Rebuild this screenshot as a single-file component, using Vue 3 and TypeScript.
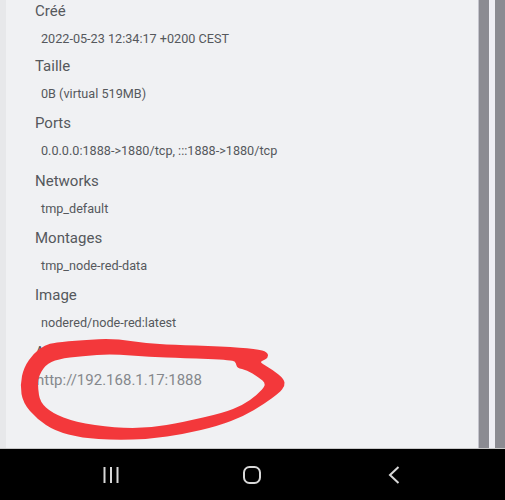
<script setup lang="ts">
const rows: { label: string; value: string }[] = [
  { label: 'Créé', value: '2022-05-23 12:34:17 +0200 CEST' },
  { label: 'Taille', value: '0B (virtual 519MB)' },
  { label: 'Ports', value: '0.0.0.0:1888->1880/tcp, :::1888->1880/tcp' },
  { label: 'Networks', value: 'tmp_default' },
  { label: 'Montages', value: 'tmp_node-red-data' },
  { label: 'Image', value: 'nodered/node-red:latest' },
]

type Pt = [number, number]

const outer: Pt[] = [
  [34, 353], [45, 345], [55, 342.5], [82, 340], [115, 338.5], [150, 344], [183, 345],
  [233, 347], [261, 349.5], [268, 353], [268, 358], [262, 361], [260, 362.5], [273, 370], [284, 379],
  [285, 386], [279, 393], [264, 404], [244, 416], [218, 426], [184, 434], [150, 439],
  [115, 440], [82, 438], [55, 431], [37, 419], [23, 403], [20, 385], [24, 367],
]

const inner: Pt[] = [
  [38, 388], [38, 378], [45, 365], [58, 359], [82, 356], [112, 354], [150, 357],
  [183, 358], [233, 360], [236, 363], [237, 368], [247, 370], [258, 377], [267, 384],
  [257, 395], [243, 405], [223, 413], [183, 422], [150, 428], [115, 428], [75, 422],
  [52, 413], [40, 402],
]

function smooth(points: Pt[]): string {
  const mid = (a: Pt, b: Pt): string => `${(a[0] + b[0]) / 2} ${(a[1] + b[1]) / 2}`
  const n = points.length
  let d = `M${mid(points[n - 1], points[0])}`
  points.forEach((p, i) => {
    d += ` Q${p[0]} ${p[1]} ${mid(p, points[(i + 1) % n])}`
  })
  return d + ' Z'
}

const ringPath = `${smooth(outer)} ${smooth(inner)}`
</script>

<template>
  <div class="screen">
    <div class="page">
      <div class="edge"></div>
      <main class="panel">
        <section v-for="r in rows" :key="r.label" class="row">
          <div class="label">{{ r.label }}</div>
          <div class="value">{{ r.value }}</div>
        </section>
        <section class="row last">
          <div class="label">Accès</div>
          <a class="link">http://192.168.1.17:1888</a>
        </section>
      </main>
      <div class="rail"></div>
      <div class="gap"></div>
      <div class="rail end"></div>
      <svg class="scribble" viewBox="0 0 505 449" width="505" height="449">
        <path :d="ringPath" fill="#f3383b" fill-rule="evenodd"/>
      </svg>
    </div>
    <nav class="navbar">
      <svg class="nav-icon" viewBox="0 0 20 20" width="20" height="20">
        <path d="M3.5 2v16M10 2v16M16.5 2v16" stroke="#d8d8d8" stroke-width="2" fill="none"/>
      </svg>
      <svg class="nav-icon" viewBox="0 0 20 20" width="20" height="20">
        <rect x="2" y="2" width="16" height="16" rx="5.5" stroke="#d8d8d8" stroke-width="2" fill="none"/>
      </svg>
      <svg class="nav-icon" viewBox="0 0 20 20" width="20" height="20">
        <path d="M14.5 2 L6 10 L14.5 18" stroke="#d8d8d8" stroke-width="2" fill="none"/>
      </svg>
    </nav>
  </div>
</template>

<style scoped>
.screen {
  width: 505px;
  height: 500px;
  display: flex;
  flex-direction: column;
  overflow: hidden;
  font-family: Roboto, "Liberation Sans", sans-serif;
}
.page {
  position: relative;
  height: 449px;
  display: flex;
  background: #f0f1f3;
  border-bottom: 1px solid #c8c8c8;
  box-sizing: border-box;
}
.edge {
  width: 6px;
  background: #e7e8ea;
}
.panel {
  width: 472px;
  box-sizing: border-box;
  padding: 1px 0 0 29px;
  display: flex;
  flex-direction: column;
}
.row {
  height: 57.25px;
  flex: none;
}
.row:first-child {
  height: 55px;
}
.label {
  font-size: 15px;
  line-height: 20px;
  color: #55585c;
}
.value {
  margin-top: 8px;
  padding-left: 6px;
  font-size: 12.65px;
  line-height: 20px;
  color: #55585c;
}
.link {
  display: block;
  margin-top: 8px;
  padding-left: 1px;
  font-size: 15px;
  line-height: 20px;
  color: #85888c;
}
.rail {
  width: 10px;
  background: #8b8b92;
  border-left: 1px solid #c4c4cc;
  box-sizing: content-box;
}
.rail.end {
  width: 10px;
  border-left: 0;
}
.gap {
  width: 6px;
  background: #eeeef4;
}
.scribble {
  position: absolute;
  left: 0;
  top: 0;
  pointer-events: none;
}
.navbar {
  flex: 1;
  background: #000;
  display: grid;
  grid-template-columns: repeat(3, 141.5px);
  justify-items: center;
  align-items: center;
  padding-left: 40px;
}
</style>

<style>
html, body { margin: 0; background: #000; }
</style>
